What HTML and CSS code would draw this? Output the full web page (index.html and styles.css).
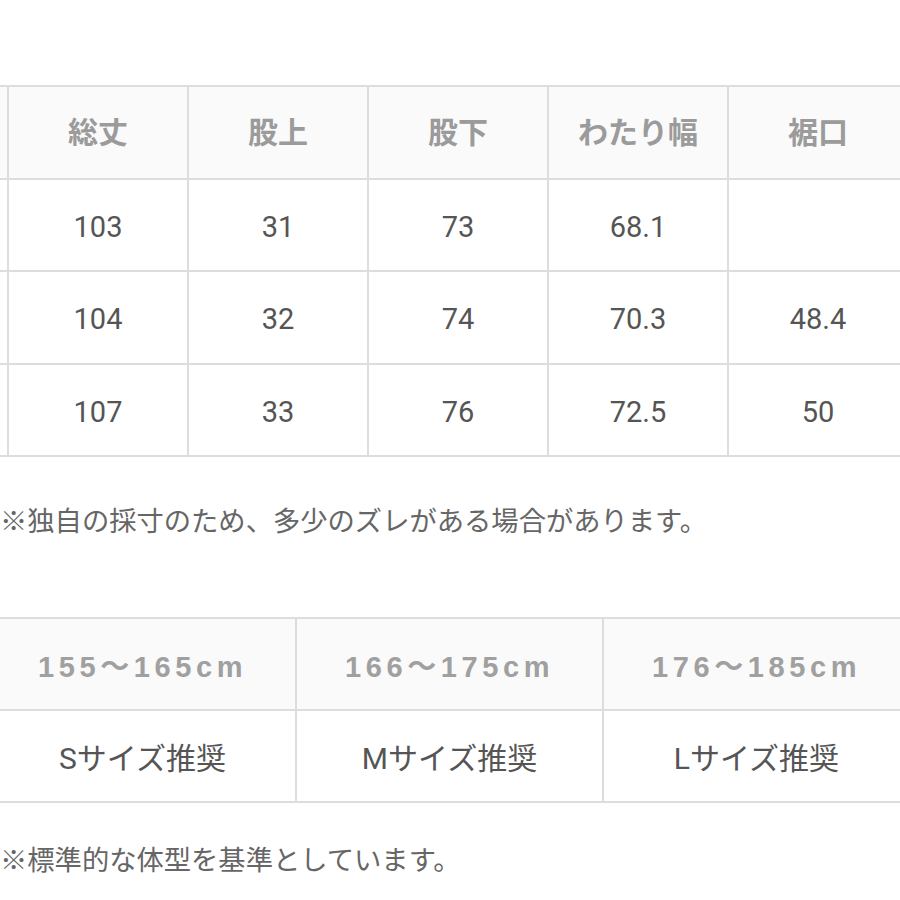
FILE: index.html
```html
<!DOCTYPE html>
<html lang="ja">
<head>
<meta charset="utf-8">
<link rel="stylesheet" href="styles.css">
</head>
<body>
<div class="page">
  <div class="scroller">
    <table class="size-table">
      <thead>
        <tr>
          <th>サイズ</th><th>総丈</th><th>股上</th><th>股下</th><th>わたり幅</th><th>裾口</th><th>ウエスト</th>
        </tr>
      </thead>
      <tbody>
        <tr><td>S</td><td>103</td><td>31</td><td>73</td><td>68.1</td><td></td><td>76</td></tr>
        <tr><td>M</td><td>104</td><td>32</td><td>74</td><td>70.3</td><td>48.4</td><td>80</td></tr>
        <tr><td>L</td><td>107</td><td>33</td><td>76</td><td>72.5</td><td>50</td><td>84</td></tr>
      </tbody>
    </table>
  </div>
  <p class="note note-first">※独自の採寸のため、多少のズレがある場合があります。</p>

  <div class="scroller">
    <table class="fit-table">
      <thead>
        <tr><th>155〜165cm</th><th>166〜175cm</th><th>176〜185cm</th></tr>
      </thead>
      <tbody>
        <tr><td>Sサイズ推奨</td><td>Mサイズ推奨</td><td>Lサイズ推奨</td></tr>
      </tbody>
    </table>
  </div>
  <p class="note note-second">※標準的な体型を基準としています。</p>
</div>
</body>
</html>
```

FILE: styles.css
```css
html, body {
  margin: 0;
  padding: 0;
  background: #ffffff;
}

body {
  font-family: Roboto, "Noto Sans CJK JP", sans-serif;
  color: #555555;
  overflow: hidden;
}

.page {
  width: 900px;
  height: 900px;
  overflow: hidden;
  padding-top: 85px;
  box-sizing: border-box;
}

.scroller {
  width: 900px;
  overflow: hidden;
}

table {
  border-collapse: collapse;
  table-layout: fixed;
}

th, td {
  border: 2px solid #dddddd;
  text-align: center;
  vertical-align: middle;
  padding: 0;
  box-sizing: border-box;
}

th {
  background: #fafafa;
  color: #9b9b9b;
  font-weight: 700;
}

td {
  background: #ffffff;
  color: #555555;
  font-weight: 400;
}

.size-table {
  margin-left: -173px;
  width: 1260px;
}

.size-table th,
.size-table td {
  width: 180px;
  height: 92.5px;
}

.size-table th {
  font-family: "Noto Sans CJK JP", sans-serif;
  font-size: 30px;
  padding-bottom: 4px;
}

.size-table td {
  font-size: 29px;
  padding-top: 4px;
}

.fit-table {
  margin-left: -12px;
  width: 921px;
}

.fit-table th,
.fit-table td {
  width: 307px;
  height: 92px;
}

.fit-table th {
  font-family: "Liberation Sans", "Noto Sans CJK JP", sans-serif;
  font-size: 29px;
  letter-spacing: 4.6px;
  color: #a0a0a0;
}

.fit-table td {
  font-size: 30px;
}

.note {
  margin: 0;
  font-family: "Noto Sans CJK JP", sans-serif;
  font-size: 27.3px;
  line-height: 40px;
  color: #666666;
  white-space: nowrap;
}

.note-first {
  margin-top: 42px;
  margin-bottom: 78px;
}

.note-second {
  margin-top: 35px;
}
```
